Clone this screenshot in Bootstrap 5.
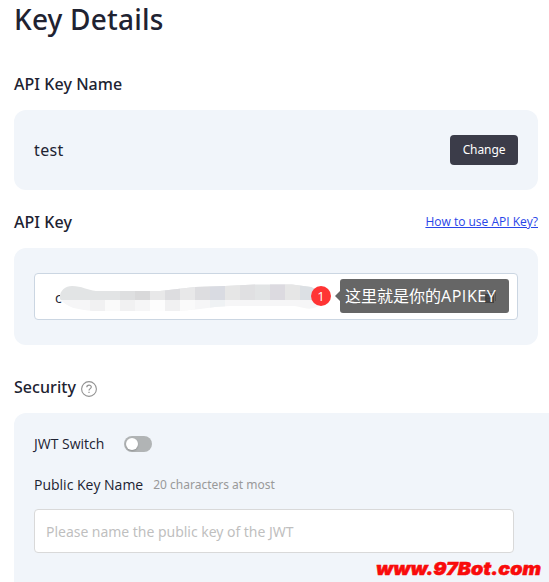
<!DOCTYPE html>
<html lang="en">
<head>
<meta charset="utf-8">
<meta name="viewport" content="width=device-width, initial-scale=1">
<title>Key Details</title>
<link href="https://cdn.jsdelivr.net/npm/bootstrap@5.3.0/dist/css/bootstrap.min.css" rel="stylesheet">
<style>
body{font-family:"Noto Sans","Open Sans",sans-serif;color:#202231;width:549px;height:582px;overflow:hidden;background:#fff}
.details{padding-left:14px}
.page-title{font-size:28px;line-height:38px;font-weight:500;height:72px;letter-spacing:.2px}
.section-title{font-size:16px;line-height:24px;font-weight:500;letter-spacing:.06px}
.panel{background:#f1f5fa;border-radius:12px;width:524px;padding:0 20px}
.panel-name{height:80px;margin:14px 0 20px}
.panel-key{height:97px;margin:14px 0 30px;padding-top:25px}
.panel-security{width:560px;height:190px;margin-top:14px}
.key-name{font-size:16px;font-weight:400;letter-spacing:.35px}
.btn-change{width:68px;height:30px;padding:0;font-size:12px;border:0;border-radius:4px;background:#3b3c49;color:#fff;letter-spacing:-.1px}
.help-link{font:400 12px/24px "Open Sans",sans-serif;color:#2945e8}
.key-row{width:524px}
.key-box{height:47px;width:484px;background:#fff;border:1px solid #cbd6e2;border-radius:4px}
.key-char{left:20px;top:12px;font:14px/24px "Open Sans",sans-serif}
.mosaic{left:0;top:0}
.step{left:276px;top:12px;width:20px;height:20px;border-radius:50%;background:#ff3434;color:#fff;font:13px/20px "Open Sans",sans-serif;text-align:center}
.callout{left:305px;top:5px;width:169px;height:34px;background:#666;border-radius:3px;color:#fff;font:16px/34px "Open Sans","Noto Sans CJK SC",sans-serif;white-space:nowrap}
.callout::before{content:"";position:absolute;left:-5px;top:12px;border:5px solid transparent;border-right-color:#666;border-left:0}
.copy-icon{left:145px;top:13px}
.callout-text{left:5px;top:0}
.callout-latin{letter-spacing:.55px}
.help-icon{margin:6px 0 0 5px}
.label{font:14px/24px "Open Sans",sans-serif}
.jwt-row{padding-top:19px}
.name-row{padding-top:17px}
.toggle{width:28px;height:16px;margin-left:20px;border-radius:8px;background:#b1b4b5;padding:2px}
.toggle i{width:12px;height:12px;border-radius:50%;background:#fff;display:block;box-shadow:0 1px 2px #0003}
.hint{font:12px/24px "Noto Sans",sans-serif;color:#999;margin-left:10px}
.key-input{width:480px;height:44px;margin-top:12px;border:1px solid #d9d9d9;border-radius:4px;padding:0 11px;font:14px "Noto Sans",sans-serif;letter-spacing:-.03px}
.key-input::placeholder{color:#bfbfbf;opacity:1}
.watermark{left:375px;top:557px}
</style>
</head>
<body class="position-relative">
<main class="details">
  <h1 class="page-title m-0">Key Details</h1>
  <h2 class="section-title m-0">API Key Name</h2>
  <section class="panel panel-name d-flex align-items-center justify-content-between">
    <span class="key-name">test</span>
    <button class="btn btn-change" type="button">Change</button>
  </section>
  <div class="key-row d-flex justify-content-between">
    <h2 class="section-title m-0">API Key</h2>
    <a class="help-link" href="#">How to use API Key?</a>
  </div>
  <section class="panel panel-key">
    <div class="key-box position-relative">
      <span class="key-char position-absolute">c</span>
      <svg class="mosaic position-absolute" width="300" height="45" viewBox="35 274 300 45">
        <clipPath id="blob"><path d="M60 299C59 291 65 286 72 286C82 286 87 290 96 291H160L195 287L225 286L255 284.5H292L311 287Q324 292 323 302Q315 311 304 308L295 306H230L215 307L200 309L180 311H94C77 310 66 307 60 299Z"/></clipPath>
        <g clip-path="url(#blob)" shape-rendering="crispEdges">
          <path fill="#e2e4e5" d="M55 280h280v20H55z"/><path fill="#f6f6f7" d="M55 300h280v14H55z"/>
          <path fill="#dedfe0" d="M120 280h15v20h-15z"/><path fill="#d9d9da" d="M135 280h15v20h-15z"/><path fill="#e8e8e9" d="M150 280h15v20h-15zM180 280h15v20h-15z"/><path fill="#dddde0" d="M165 280h15v20h-15zM195 280h15v20h-15z"/><path fill="#d9dbe2" d="M210 280h15v20h-15z"/><path fill="#e6e6e6" d="M225 280h15v20h-15zM285 280h15v20h-15z"/><path fill="#e0e0e2" d="M240 280h15v20h-15z"/><path fill="#dcdae0" d="M270 280h15v20h-15z"/><path fill="#dce0e4" d="M300 280h30v20h-30z"/>
          <path fill="#f1f1f2" d="M90 300h15v14H90zM120 300h15v14h-15zM165 300h15v14h-15z"/><path fill="#fdfdfd" d="M150 300h15v14h-15z"/><path fill="#eff2f4" d="M210 300h15v14h-15z"/><path fill="#fafafa" d="M105 300h15v14h-15zM180 300h15v14h-15z"/>
        </g>
      </svg>
      <span class="step position-absolute">1</span>
      <div class="callout position-absolute">
        <svg class="copy-icon position-absolute" width="12" height="12" viewBox="0 0 12 12"><path fill="#424242" d="M0 2h9v9H0z"/><path d="M2 .5h8.5V9M2 5h5M2 8h5" fill="none" stroke="#505050"/></svg>
        <span class="callout-text position-absolute">这里就是你的<span class="callout-latin">APIKEY</span></span>
      </div>
    </div>
  </section>
  <div class="d-flex">
    <h2 class="section-title m-0">Security</h2>
    <svg class="help-icon" width="16" height="16" viewBox="0 0 16 16" fill="none" stroke="#929292"><circle cx="8" cy="8" r="7.4" stroke-width="1.1"/><path d="M5.8 6.3C5.8 3.4 10.3 3.5 10.3 6.1C10.3 7.7 8 7.6 8 9.5M8 10.8V12" stroke-width="1.2"/></svg>
  </div>
  <section class="panel panel-security">
    <div class="jwt-row d-flex align-items-center"><span class="label">JWT Switch</span><span class="toggle"><i></i></span></div>
    <div class="name-row d-flex"><span class="label">Public Key Name</span><span class="hint">20 characters at most</span></div>
    <input class="key-input d-block" placeholder="Please name the public key of the JWT">
  </section>
</main>
<svg class="watermark position-absolute" width="174" height="25"><text x="1" y="18" textLength="165" lengthAdjust="spacingAndGlyphs" font-family="Inter" font-size="18" font-weight="900" font-style="italic" fill="#f90b0b" stroke="#f90b0b" stroke-width=".5">www.97Bot.com</text></svg>
<script src="https://cdn.jsdelivr.net/npm/bootstrap@5.3.0/dist/js/bootstrap.bundle.min.js"></script>
</body>
</html>
